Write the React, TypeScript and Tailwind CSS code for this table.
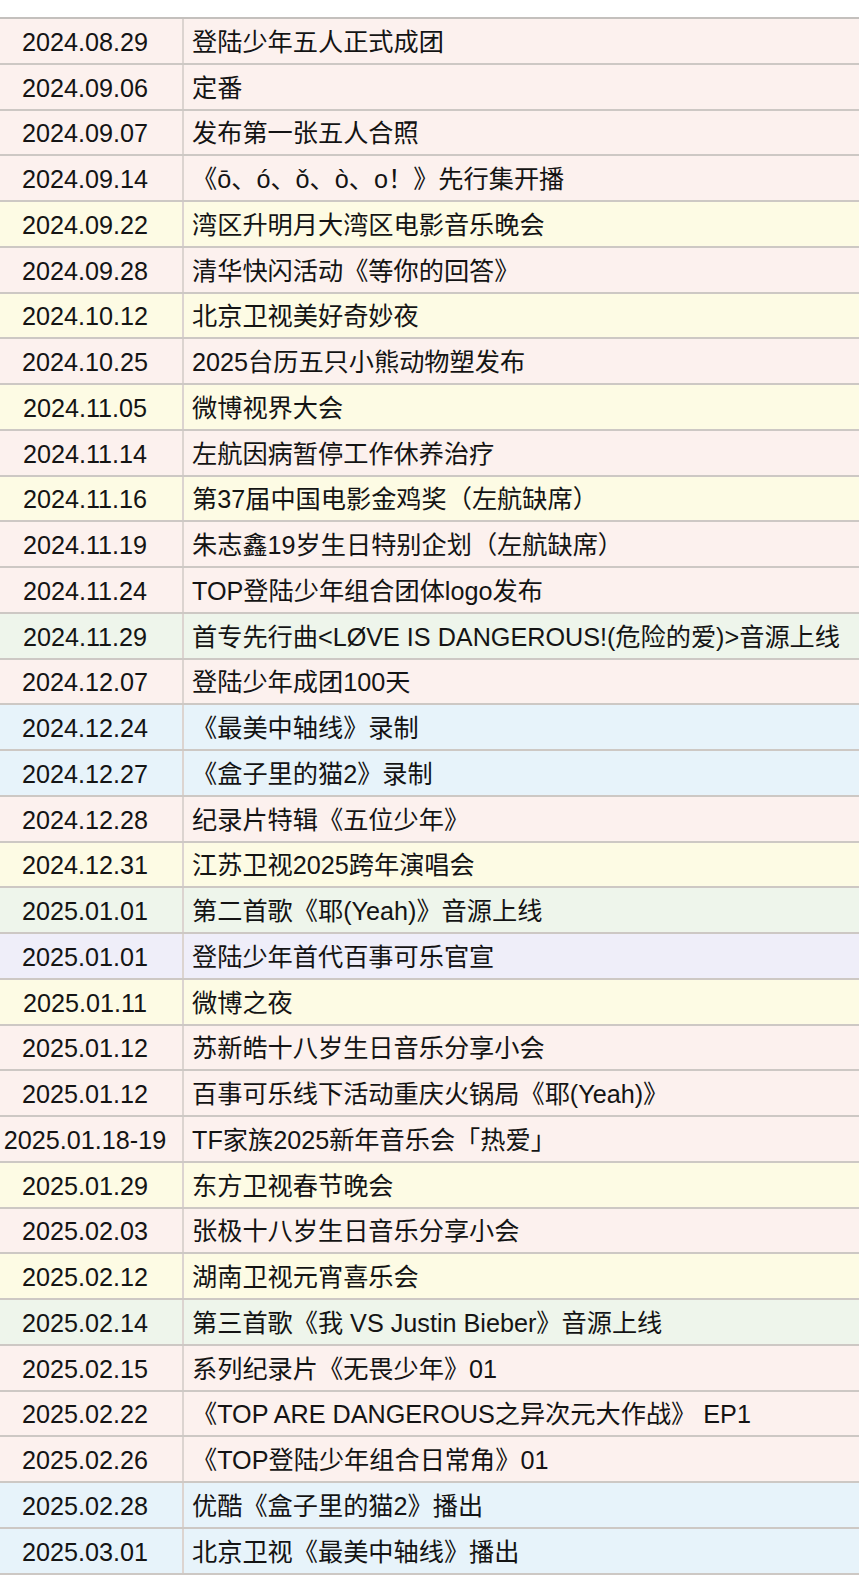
type Tone = "pink" | "yellow" | "green" | "blue" | "lavender";

interface Entry {
  date: string;
  event: string;
  tone: Tone;
}

const TONE_BG: Record<Tone, string> = {
  pink: "bg-[#fcf1ee]",
  yellow: "bg-[#fdfbe4]",
  green: "bg-[#eef5eb]",
  blue: "bg-[#e7f3fa]",
  lavender: "bg-[#efeef9]",
};

const ENTRIES: Entry[] = [
  { date: "2024.08.29", event: "登陆少年五人正式成团", tone: "pink" },
  { date: "2024.09.06", event: "定番", tone: "pink" },
  { date: "2024.09.07", event: "发布第一张五人合照", tone: "pink" },
  { date: "2024.09.14", event: "《ō、ó、ǒ、ò、o！》先行集开播", tone: "pink" },
  { date: "2024.09.22", event: "湾区升明月大湾区电影音乐晚会", tone: "yellow" },
  { date: "2024.09.28", event: "清华快闪活动《等你的回答》", tone: "pink" },
  { date: "2024.10.12", event: "北京卫视美好奇妙夜", tone: "yellow" },
  { date: "2024.10.25", event: "2025台历五只小熊动物塑发布", tone: "pink" },
  { date: "2024.11.05", event: "微博视界大会", tone: "yellow" },
  { date: "2024.11.14", event: "左航因病暂停工作休养治疗", tone: "pink" },
  { date: "2024.11.16", event: "第37届中国电影金鸡奖（左航缺席）", tone: "yellow" },
  { date: "2024.11.19", event: "朱志鑫19岁生日特别企划（左航缺席）", tone: "pink" },
  { date: "2024.11.24", event: "TOP登陆少年组合团体logo发布", tone: "pink" },
  { date: "2024.11.29", event: "首专先行曲<LØVE IS DANGEROUS!(危险的爱)>音源上线", tone: "green" },
  { date: "2024.12.07", event: "登陆少年成团100天", tone: "pink" },
  { date: "2024.12.24", event: "《最美中轴线》录制", tone: "blue" },
  { date: "2024.12.27", event: "《盒子里的猫2》录制", tone: "blue" },
  { date: "2024.12.28", event: "纪录片特辑《五位少年》", tone: "pink" },
  { date: "2024.12.31", event: "江苏卫视2025跨年演唱会", tone: "yellow" },
  { date: "2025.01.01", event: "第二首歌《耶(Yeah)》音源上线", tone: "green" },
  { date: "2025.01.01", event: "登陆少年首代百事可乐官宣", tone: "lavender" },
  { date: "2025.01.11", event: "微博之夜", tone: "yellow" },
  { date: "2025.01.12", event: "苏新皓十八岁生日音乐分享小会", tone: "pink" },
  { date: "2025.01.12", event: "百事可乐线下活动重庆火锅局《耶(Yeah)》", tone: "pink" },
  { date: "2025.01.18-19", event: "TF家族2025新年音乐会「热爱」", tone: "pink" },
  { date: "2025.01.29", event: "东方卫视春节晚会", tone: "yellow" },
  { date: "2025.02.03", event: "张极十八岁生日音乐分享小会", tone: "pink" },
  { date: "2025.02.12", event: "湖南卫视元宵喜乐会", tone: "yellow" },
  { date: "2025.02.14", event: "第三首歌《我 VS Justin Bieber》音源上线", tone: "green" },
  { date: "2025.02.15", event: "系列纪录片《无畏少年》01", tone: "pink" },
  { date: "2025.02.22", event: "《TOP ARE DANGEROUS之异次元大作战》 EP1", tone: "pink" },
  { date: "2025.02.26", event: "《TOP登陆少年组合日常角》01", tone: "pink" },
  { date: "2025.02.28", event: "优酷《盒子里的猫2》播出", tone: "blue" },
  { date: "2025.03.01", event: "北京卫视《最美中轴线》播出", tone: "blue" },
];

function TimelineRow({ entry }: { entry: Entry }) {
  return (
    <div
      className={`flex h-[45.76px] items-center border-b-2 border-[#cdc8c4] pt-[3px] ${TONE_BG[entry.tone]}`}
    >
      <div className="flex w-[184px] shrink-0 items-center justify-center self-stretch border-r-2 border-[#dcd4d0] pr-[12px] -mt-[3px] pt-[3px]">
        {entry.date}
      </div>
      <div className="whitespace-nowrap pl-[8px]">{entry.event}</div>
    </div>
  );
}

export default function App() {
  return (
    <div className="min-h-[1582px] bg-white pt-[17px]">
      <div
        className="border-t-2 border-[#c4c0bd] text-[25.2px] leading-none text-[#141414]"
        style={{ fontFamily: '"Liberation Sans", "Noto Sans CJK SC", sans-serif' }}
      >
        {ENTRIES.map((entry, i) => (
          <TimelineRow key={i} entry={entry} />
        ))}
      </div>
    </div>
  );
}
